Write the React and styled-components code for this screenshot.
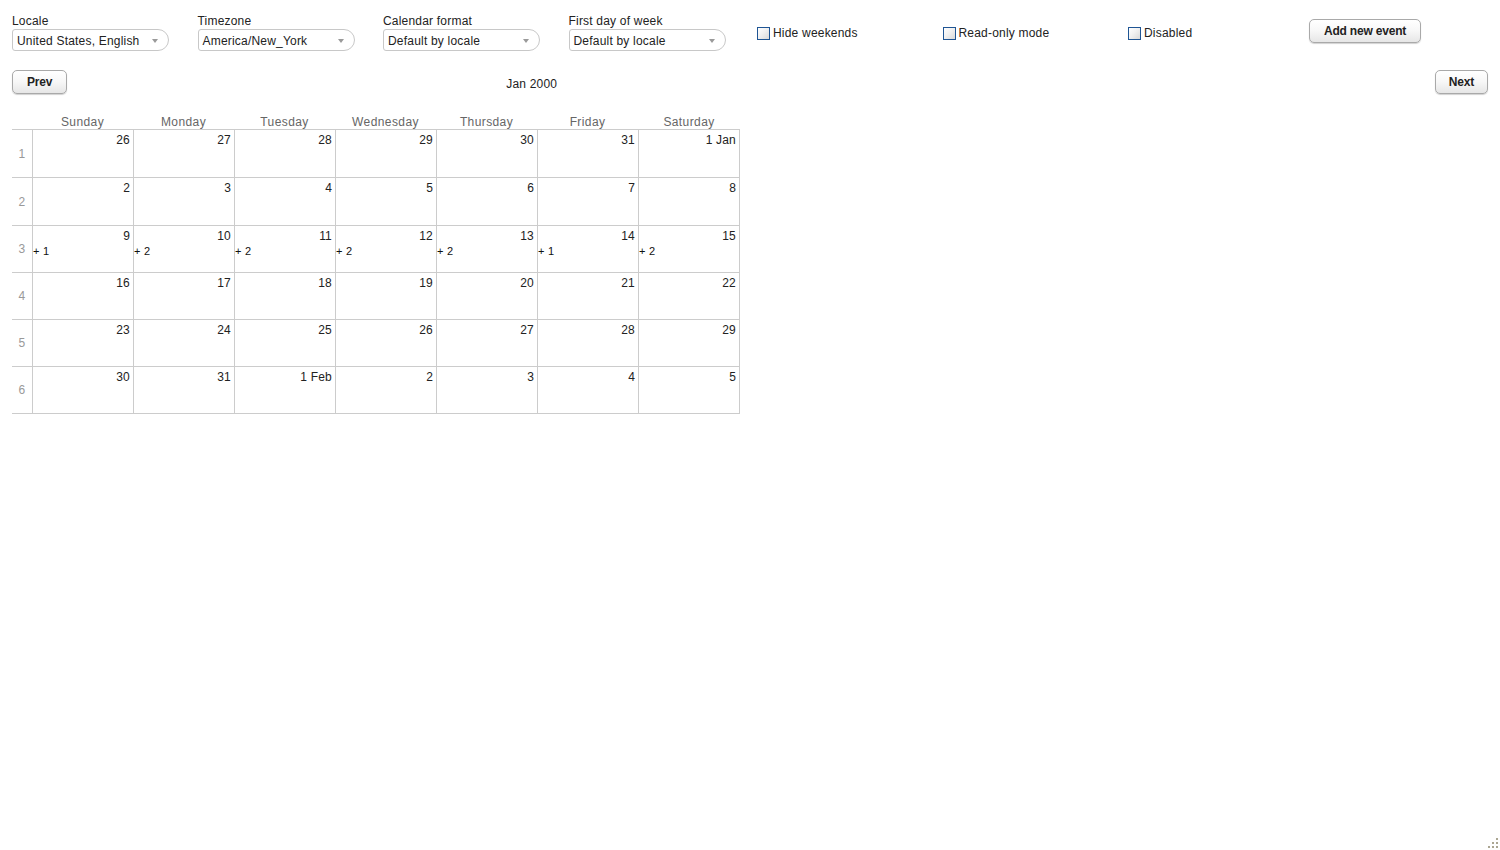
import React from "react";
import styled, { createGlobalStyle } from "styled-components";

const GlobalStyle = createGlobalStyle`
  html, body {
    margin: 0;
    padding: 0;
    background: #ffffff;
  }
  body {
    font-family: "Liberation Sans", Arial, Helvetica, sans-serif;
    font-size: 12px;
    letter-spacing: 0.2px;
    color: #222;
  }
`;

const Page = styled.div`
  padding: 14px 12px 0 12px;
`;

const Toolbar = styled.div`
  display: grid;
  grid-template-columns: repeat(7, 185.5px) auto;
  align-items: start;
`;

const Field = styled.div`
  display: flex;
  flex-direction: column;
  gap: 1px;
`;

const FieldLabel = styled.label`
  line-height: 14px;
  color: #222;
`;

const SelectBox = styled.div`
  position: relative;
  box-sizing: border-box;
  width: 157px;
  height: 22px;
  padding: 4px 20px 3px 4px;
  border: 1px solid #c8c8c8;
  border-radius: 3px 11px 11px 3px;
  background: #fff;
  line-height: 14px;
  color: #222;
  white-space: nowrap;
`;

const Caret = styled.span`
  position: absolute;
  right: 10px;
  top: 9px;
  width: 0;
  height: 0;
  border-left: 3px solid transparent;
  border-right: 3px solid transparent;
  border-top: 4px solid #9a9a9a;
`;

const CheckField = styled.label`
  display: flex;
  align-items: center;
  gap: 3px;
  margin: 12px 0 0 3px;
  line-height: 13px;
  color: #222;
`;

const CheckText = styled.span`
  padding-top: 1px;
`;

const CheckBox = styled.span`
  box-sizing: border-box;
  display: inline-block;
  width: 13px;
  height: 13px;
  border: 1px solid #1f5594;
  background: linear-gradient(135deg, #ffffff 0%, #f1f1f1 45%, #d9d9d9 100%);
`;

const Button = styled.button`
  box-sizing: border-box;
  height: 24px;
  padding: 1px ${(p) => p.$pad || 14}px 0;
  border: 1px solid #a9a9a9;
  border-radius: 5px;
  background: linear-gradient(#ffffff 0%, #f7f7f7 50%, #e6e6e6 100%);
  box-shadow: 0 1px 1px rgba(0, 0, 0, 0.18);
  font-family: "Liberation Sans", Arial, Helvetica, sans-serif;
  font-size: 12px;
  font-weight: bold;
  letter-spacing: -0.2px;
  color: #222;
  line-height: 21px;
  cursor: pointer;
`;

const AddButton = styled(Button)`
  margin: 5px 0 0 -1.5px;
  justify-self: start;
`;

const NavRow = styled.div`
  display: flex;
  align-items: center;
  margin-top: 19px;
  height: 24px;
`;

const Title = styled.div`
  margin-left: 439px;
  line-height: 14px;
  padding-top: 3px;
  color: #222;
`;

const Spacer = styled.div`
  flex: 1;
`;

const Calendar = styled.div`
  margin-top: 20px;
  width: 728px;
`;

const HeaderRow = styled.div`
  display: grid;
  grid-template-columns: 20px repeat(6, 101px) 102px;
  height: 15px;
  box-sizing: border-box;
  padding-top: 1px;
`;

const DayName = styled.div`
  text-align: center;
  line-height: 14px;
  color: #666;
  letter-spacing: 0.4px;
`;

const Grid = styled.div`
  border-top: 1px solid #cccccc;
`;

const WeekRow = styled.div`
  display: grid;
  grid-template-columns: 20px repeat(6, 101px) 102px;
  height: ${(p) => p.$h}px;
  box-sizing: border-box;
  border-bottom: 1px solid #cccccc;
`;

const WeekNum = styled.div`
  display: flex;
  align-items: center;
  justify-content: center;
  color: #999;
  line-height: 14px;
`;

const DayCell = styled.div`
  box-sizing: border-box;
  border-left: 1px solid #cccccc;
  border-right: ${(p) => (p.$last ? "1px solid #cccccc" : "none")};
  padding: 4px 0 0 0;
  display: flex;
  flex-direction: column;
`;

const DateNum = styled.div`
  text-align: right;
  padding-right: 3px;
  line-height: 13px;
  color: #222;
`;

const More = styled.div`
  font-size: 11px;
  line-height: 14px;
  padding: 1px 0 0 0;
  color: #111;
`;

const Grip = styled.svg`
  position: fixed;
  right: 2px;
  bottom: 2px;
  width: 12px;
  height: 12px;
`;

const selects = [
  { label: "Locale", value: "United States, English" },
  { label: "Timezone", value: "America/New_York" },
  { label: "Calendar format", value: "Default by locale" },
  { label: "First day of week", value: "Default by locale" },
];

const checks = ["Hide weekends", "Read-only mode", "Disabled"];

const days = ["Sunday", "Monday", "Tuesday", "Wednesday", "Thursday", "Friday", "Saturday"];

const weeks = [
  { h: 48, dates: ["26", "27", "28", "29", "30", "31", "1 Jan"] },
  { h: 48, dates: ["2", "3", "4", "5", "6", "7", "8"] },
  {
    h: 47,
    dates: ["9", "10", "11", "12", "13", "14", "15"],
    more: ["+ 1", "+ 2", "+ 2", "+ 2", "+ 2", "+ 1", "+ 2"],
  },
  { h: 47, dates: ["16", "17", "18", "19", "20", "21", "22"] },
  { h: 47, dates: ["23", "24", "25", "26", "27", "28", "29"] },
  { h: 47, dates: ["30", "31", "1 Feb", "2", "3", "4", "5"] },
];

export default function App() {
  return (
    <>
      <GlobalStyle />
      <Page>
        <Toolbar>
          {selects.map((s) => (
            <Field key={s.label}>
              <FieldLabel>{s.label}</FieldLabel>
              <SelectBox>
                {s.value}
                <Caret />
              </SelectBox>
            </Field>
          ))}
          {checks.map((c) => (
            <CheckField key={c}>
              <CheckBox />
              <CheckText>{c}</CheckText>
            </CheckField>
          ))}
          <AddButton $pad={14}>Add new event</AddButton>
        </Toolbar>

        <NavRow>
          <Button>Prev</Button>
          <Title>Jan 2000</Title>
          <Spacer />
          <Button $pad={13}>Next</Button>
        </NavRow>

        <Calendar>
          <HeaderRow>
            <div />
            {days.map((d) => (
              <DayName key={d}>{d}</DayName>
            ))}
          </HeaderRow>
          <Grid>
            {weeks.map((w, wi) => (
              <WeekRow key={wi} $h={w.h}>
                <WeekNum>{wi + 1}</WeekNum>
                {w.dates.map((d, di) => (
                  <DayCell key={di} $last={di === 6}>
                    <DateNum>{d}</DateNum>
                    {w.more && <More>{w.more[di]}</More>}
                  </DayCell>
                ))}
              </WeekRow>
            ))}
          </Grid>
        </Calendar>
      </Page>
      <Grip viewBox="0 0 12 12">
        {[
          [10, 2],
          [6, 6],
          [10, 6],
          [2, 10],
          [6, 10],
          [10, 10],
        ].map(([x, y]) => (
          <rect key={`${x}-${y}`} x={x} y={y} width="2" height="2" fill="#aba692" />
        ))}
      </Grip>
    </>
  );
}
